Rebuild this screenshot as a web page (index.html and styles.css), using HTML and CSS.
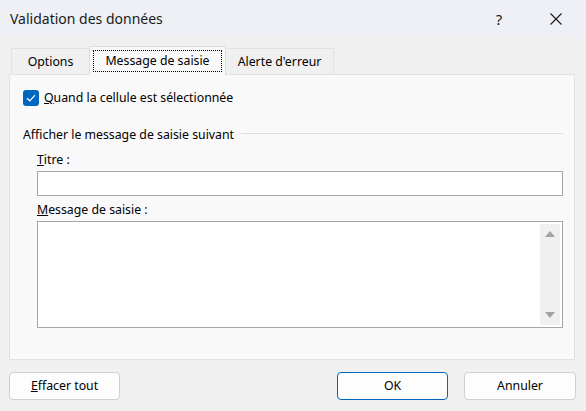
FILE: index.html
```html
<!DOCTYPE html>
<html lang="fr">
<head>
<meta charset="utf-8">
<title>Validation des données</title>
<link rel="stylesheet" href="styles.css">
</head>
<body>
<div class="dialog">
  <div class="titlebar">
    <span class="title">Validation des données</span>
    <span class="help">?</span>
    <span class="close">
      <svg width="12" height="12" viewBox="0 0 12 12"><path d="M0.5 0.5 L11.5 11.5 M11.5 0.5 L0.5 11.5" stroke="#1a1a1a" stroke-width="1.1" fill="none"/></svg>
    </span>
  </div>
  <div class="content">
    <div class="tabs">
      <div class="tab tab-options">Options</div>
      <div class="tab tab-active"><span class="focus">Message de saisie</span></div>
      <div class="tab tab-alert">Alerte d'erreur</div>
    </div>
    <div class="panel">
      <label class="check-row">
        <span class="checkbox">
          <svg width="10" height="8" viewBox="0 0 10 8"><path d="M1 4.2 L3.8 6.8 L9 1.2" stroke="#fff" stroke-width="1.2" fill="none"/></svg>
        </span>
        <span><u>Q</u>uand la cellule est sélectionnée</span>
      </label>
      <div class="group-head">
        <span>Afficher le message de saisie suivant</span>
        <span class="rule"></span>
      </div>
      <div class="fields">
        <div class="field-label"><u>T</u>itre :</div>
        <div class="textbox"></div>
        <div class="field-label msg-label"><u>M</u>essage de saisie :</div>
        <div class="textarea">
          <div class="scrollbar">
            <svg width="10" height="6" viewBox="0 0 10 6"><path d="M5 0 L10 6 L0 6 Z" fill="#a3a3a3"/></svg>
            <svg width="10" height="6" viewBox="0 0 10 6"><path d="M0 0 L10 0 L5 6 Z" fill="#a3a3a3"/></svg>
          </div>
        </div>
      </div>
    </div>
    <div class="buttons">
      <button class="btn"><u>E</u>ffacer tout</button>
      <span class="spacer"></span>
      <button class="btn btn-default">OK</button>
      <button class="btn">Annuler</button>
    </div>
  </div>
</div>
</body>
</html>
```
FILE: styles.css
```css
* { box-sizing: border-box; }
html, body {
  margin: 0;
  padding: 0;
}
body {
  width: 586px;
  height: 411px;
  background: #f0f0f0;
  font-family: "Noto Sans", "Open Sans", sans-serif;
  font-size: 12.3px;
  color: #000;
  overflow: hidden;
}
.dialog {
  width: 586px;
  height: 411px;
  display: flex;
  flex-direction: column;
}
.titlebar {
  height: 37px;
  background: #eef0f5;
  display: flex;
  align-items: center;
  padding-left: 10px;
  flex: none;
}
.title {
  font-size: 14px;
  color: #1a1a1a;
  flex: 1;
}
.help {
  font-size: 15px;
  color: #1a1a1a;
  width: 20px;
  text-align: center;
  margin-right: 41px;
}
.close {
  width: 12px;
  height: 12px;
  display: flex;
  margin-right: 24px;
}
.content {
  flex: 1;
  padding: 10px 11px 0 9px;
  display: flex;
  flex-direction: column;
}
.tabs {
  display: flex;
  align-items: flex-end;
  padding-left: 2px;
  height: 28px;
  margin-bottom: -1px;
  position: relative;
  z-index: 1;
}
.tab {
  height: 26px;
  border: 1px solid #e2e2e2;
  border-bottom: none;
  background: #f0f0f0;
  display: flex;
  align-items: center;
  justify-content: center;
  padding-bottom: 1px;
  margin-bottom: 1px;
}
.tab-options { width: 78px; border-right: none; }
.tab-alert { width: 108px; border-left: none; }
.tab-active {
  width: 137px;
  height: 29px;
  margin-bottom: 0;
  background: #f9f9f9;
  border-color: #dcdcdc;
  padding-bottom: 0;
}
.focus {
  border: 1px dotted #000;
  width: 129px;
  height: 22px;
  display: flex;
  align-items: center;
  justify-content: center;
  padding-bottom: 1px;
}
.panel {
  height: 286px;
  background: #f9f9f9;
  border: 1px solid #e2e2e2;
  padding: 14px 11px 0 13px;
}
.check-row {
  display: flex;
  align-items: center;
  gap: 5px;
  height: 17px;
}
.checkbox {
  width: 16px;
  height: 16px;
  border-radius: 3px;
  background: #0067c0;
  display: flex;
  align-items: center;
  justify-content: center;
}
.group-head {
  display: flex;
  align-items: center;
  margin-top: 19px;
  height: 18px;
}
.rule {
  flex: 1;
  height: 1px;
  background: #dedede;
  margin-left: 7px;
  margin-top: -2px;
}
.fields {
  padding-left: 14px;
}
.field-label {
  margin-top: 8px;
  height: 17px;
  line-height: 17px;
}
.textbox {
  margin-top: 3px;
  height: 25px;
  background: #fff;
  border: 1px solid #a6a6a6;
}
.msg-label {
  margin-top: 5px;
}
.textarea {
  margin-top: 3px;
  height: 107px;
  background: #fff;
  border: 1px solid #a6a6a6;
  display: flex;
  justify-content: flex-end;
  padding: 2px;
}
.scrollbar {
  width: 20px;
  background: #f0f0f0;
  display: flex;
  flex-direction: column;
  align-items: center;
  justify-content: space-between;
  padding: 7px 0 7px;
}
.buttons {
  display: flex;
  margin-top: 12px;
  margin-right: -1px;
  gap: 16px;
}
.spacer { flex: 1; }
.btn {
  width: 111px;
  height: 28px;
  font-family: inherit;
  font-size: 12.3px;
  color: #000;
  background: #fdfdfd;
  border: 1px solid #d0d0d0;
  border-radius: 4px;
  padding: 0 0 1px;
}
.btn-default {
  border-color: #0067c0;
}
.buttons .btn:last-child { width: 112px; }
```
